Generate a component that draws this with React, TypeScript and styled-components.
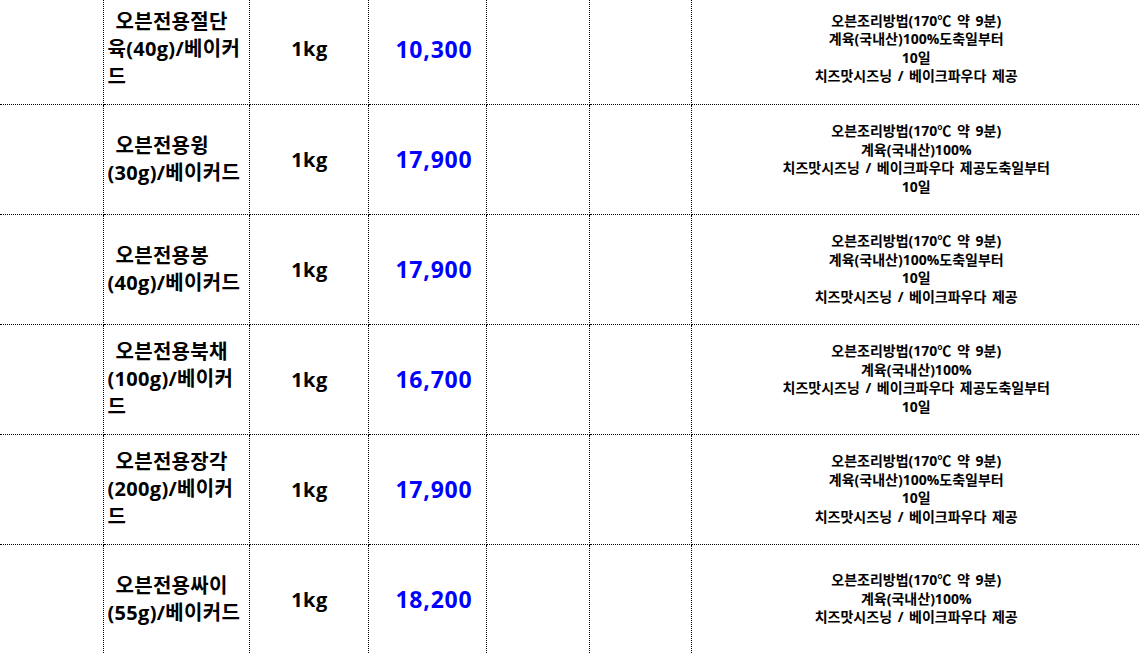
import styled, { createGlobalStyle } from 'styled-components';

const GlobalStyle = createGlobalStyle`
    html, body {
        margin: 0;
        padding: 0;
        background: #ffffff;
        overflow: hidden;
    }
    body {
        font-family: 'Open Sans', 'Noto Sans CJK KR', sans-serif;
        color: #000000;
    }
`;

type Product = {
    name: string[];
    unit: string;
    price: string;
    desc: string[];
};

const DESC_A = [
    '오븐조리방법(170℃ 약 9분)',
    '계육(국내산)100%도축일부터',
    '10일',
    '치즈맛시즈닝 / 베이크파우다 제공',
];

const DESC_B = [
    '오븐조리방법(170℃ 약 9분)',
    '계육(국내산)100%',
    '치즈맛시즈닝 / 베이크파우다 제공도축일부터',
    '10일',
];

const DESC_C = [
    '오븐조리방법(170℃ 약 9분)',
    '계육(국내산)100%',
    '치즈맛시즈닝 / 베이크파우다 제공',
];

const products: Product[] = [
    { name: ['오븐전용절단', '육(40g)/베이커', '드'], unit: '1kg', price: '10,300', desc: DESC_A },
    { name: ['오븐전용윙', '(30g)/베이커드'], unit: '1kg', price: '17,900', desc: DESC_B },
    { name: ['오븐전용봉', '(40g)/베이커드'], unit: '1kg', price: '17,900', desc: DESC_A },
    { name: ['오븐전용북채', '(100g)/베이커', '드'], unit: '1kg', price: '16,700', desc: DESC_B },
    { name: ['오븐전용장각', '(200g)/베이커', '드'], unit: '1kg', price: '17,900', desc: DESC_A },
    { name: ['오븐전용싸이', '(55g)/베이커드'], unit: '1kg', price: '18,200', desc: DESC_C },
];

// column widths taken from the sheet grid
const widths = [103, 146, 119, 118, 103, 102, 450];

export default function App() {
    return (
        <>
            <GlobalStyle />
            <Sheet>
                <colgroup>
                    {widths.map((w, i) => (
                        <col key={i} style={{ width: w }} />
                    ))}
                </colgroup>
                <tbody>
                    {products.map((p, i) => (
                        <Row key={i}>
                            <Cell />
                            <NameCell>
                                {p.name.map((line, j) => (
                                    <span key={j}>
                                        {j > 0 && <br />}
                                        {line}
                                    </span>
                                ))}
                            </NameCell>
                            <UnitCell>{p.unit}</UnitCell>
                            <PriceCell>{p.price}</PriceCell>
                            <Cell />
                            <Cell />
                            <DescCell>
                                {p.desc.map((line, j) => (
                                    <DescLine key={j}>{line}</DescLine>
                                ))}
                            </DescCell>
                        </Row>
                    ))}
                </tbody>
            </Sheet>
        </>
    );
}

const Sheet = styled.table`
    table-layout: fixed;
    border-collapse: collapse;
    width: 1141px;
    margin-top: -6px;
`;

const Row = styled.tr`
    height: 110px;
`;

const Cell = styled.td`
    padding: 0;
    border-right: 1px dotted #000;
    border-bottom: 1px dotted #000;
    vertical-align: middle;
`;

const NameCell = styled(Cell)`
    padding-left: 4px;
    font-size: 20px;
    font-weight: 700;
    letter-spacing: 0.3px;
    line-height: 27.5px;
    text-indent: 8px;
    text-align: left;
    white-space: nowrap;
`;

const UnitCell = styled(Cell)`
    padding-left: 2px;
    font-size: 20px;
    font-weight: 700;
    letter-spacing: 0.5px;
    text-align: center;
`;

const PriceCell = styled(Cell)`
    padding-right: 13px;
    font-size: 23px;
    font-weight: 700;
    letter-spacing: 0.8px;
    color: #0000ff;
    text-align: right;
`;

const DescCell = styled(Cell)`
    border-right: none;
    font-size: 14px;
    font-weight: 700;
    word-spacing: 2px;
    line-height: 18.5px;
    text-align: center;
`;

const DescLine = styled.div`
    white-space: nowrap;
`;
